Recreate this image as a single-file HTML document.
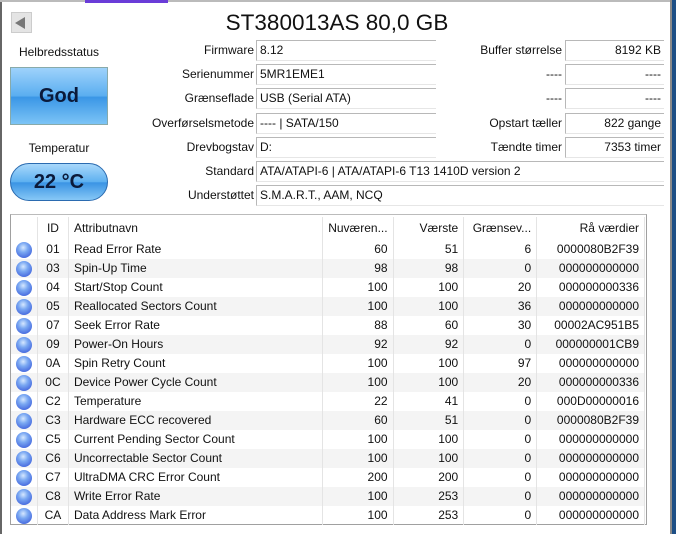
<!DOCTYPE html>
<html><head><meta charset="utf-8"><style>
*{margin:0;padding:0;box-sizing:border-box}
body{width:676px;height:534px;background:#fff;font-family:"Liberation Sans",sans-serif;font-size:12px;color:#111;position:relative;overflow:hidden}
.a{position:absolute}
.lbl{position:absolute;text-align:right;white-space:nowrap;line-height:20px}
.box{position:absolute;height:21px;border:1px solid #b8b8b8;border-right:none;border-bottom:1px solid #e6e6e6;line-height:19px;padding:0 3px;white-space:nowrap;background:#fff}
.r{text-align:right}
table{border-collapse:collapse;position:absolute;left:11px;top:217px;width:634px;font-size:12px}
td{height:19px;line-height:19px;padding:0 5px;border-right:1px solid #e4e4e4;white-space:nowrap}
tr:nth-child(odd) td{background:#f4f4f4}
tr.h td{height:23px;background:#fff}
.dot{width:16px;height:16px;border-radius:50%;background:radial-gradient(circle at 45% 35%,#d6e8ff 0,#7aa8f2 35%,#4a6ee0 75%,#3048b8 100%);margin:0 auto}
</style></head><body>
<div class="a" style="left:0;top:0;width:2px;height:534px;background:#666"></div>
<div class="a" style="left:0;top:0;width:676px;height:2px;background:#bbb"></div>
<div class="a" style="left:85px;top:0;width:83px;height:3px;background:#6a3cd8"></div>
<div class="a" style="left:670px;top:0;width:2px;height:534px;background:#8a8a8a"></div>
<div class="a" style="left:672px;top:0;width:4px;height:534px;background:#1d4f86"></div>
<div class="a" style="left:11px;top:12px;width:21px;height:21px;background:#e4e4e4;border:1px solid #ccc"></div>
<div class="a" style="left:15px;top:17px;width:0;height:0;border-top:6px solid transparent;border-bottom:6px solid transparent;border-right:10px solid #777"></div>
<div class="a" style="left:137px;top:8px;width:400px;text-align:center;font-size:22.5px;line-height:30px">ST380013AS 80,0 GB</div>
<div class="a" style="left:10px;top:43px;width:98px;text-align:center;line-height:18px">Helbredsstatus</div>
<div class="a" style="left:10px;top:67px;width:98px;height:58px;border:1px solid #8aa;background:linear-gradient(#9ed2fb,#5aaef0 50%,#3a96e6 52%,#7cc4f6);text-align:center;line-height:56px;font-weight:bold;font-size:20px;color:#0b1a3a">God</div>
<div class="a" style="left:10px;top:139px;width:98px;text-align:center;line-height:18px">Temperatur</div>
<div class="a" style="left:10px;top:163px;width:98px;height:38px;border-radius:19px;border:1px solid #2b6bb0;background:linear-gradient(#a9d8fb,#5db0f0 50%,#3a94e4 52%,#86c8f6);text-align:center;line-height:36px;font-weight:bold;font-size:20px;color:#0b1a3a">22 °C</div>

<div class="lbl" style="right:422px;top:40px">Firmware</div><div class="box" style="left:256px;top:40px;width:180px">8.12</div>
<div class="lbl" style="right:422px;top:64px">Serienummer</div><div class="box" style="left:256px;top:64px;width:180px">5MR1EME1</div>
<div class="lbl" style="right:422px;top:88px">Grænseflade</div><div class="box" style="left:256px;top:88px;width:180px">USB (Serial ATA)</div>
<div class="lbl" style="right:422px;top:113px">Overførselsmetode</div><div class="box" style="left:256px;top:113px;width:180px">---- | SATA/150</div>
<div class="lbl" style="right:422px;top:137px">Drevbogstav</div><div class="box" style="left:256px;top:137px;width:180px">D:</div>
<div class="lbl" style="right:422px;top:161px">Standard</div><div class="box" style="left:256px;top:161px;width:408px">ATA/ATAPI-6 | ATA/ATAPI-6 T13 1410D version 2</div>
<div class="lbl" style="right:422px;top:185px">Understøttet</div><div class="box" style="left:256px;top:185px;width:408px">S.M.A.R.T., AAM, NCQ</div>

<div class="lbl" style="right:114px;top:40px">Buffer størrelse</div><div class="box r" style="left:565px;top:40px;width:99px">8192 KB</div>
<div class="lbl" style="right:114px;top:64px">----</div><div class="box r" style="left:565px;top:64px;width:99px">----</div>
<div class="lbl" style="right:114px;top:88px">----</div><div class="box r" style="left:565px;top:88px;width:99px">----</div>
<div class="lbl" style="right:114px;top:113px">Opstart tæller</div><div class="box r" style="left:565px;top:113px;width:99px">822 gange</div>
<div class="lbl" style="right:114px;top:137px">Tændte timer</div><div class="box r" style="left:565px;top:137px;width:99px">7353 timer</div>

<div class="a" style="left:10px;top:214px;width:637px;height:311px;border:1px solid #a0a0a0;border-top-color:#bbb"></div>
<table>
<colgroup><col style="width:25px"><col style="width:31px"><col style="width:255px"><col style="width:71px"><col style="width:71px"><col style="width:73px"><col style="width:108px"></colgroup>
<tr class="h"><td></td><td style="text-align:center">ID</td><td>Attributnavn</td><td class="r">Nuværen...</td><td class="r">Værste</td><td class="r">Grænsev...</td><td class="r">Rå værdier</td></tr>
<tr><td><div class="dot"></div></td><td style="text-align:center">01</td><td>Read Error Rate</td><td class="r">60</td><td class="r">51</td><td class="r">6</td><td class="r">0000080B2F39</td></tr>
<tr><td><div class="dot"></div></td><td style="text-align:center">03</td><td>Spin-Up Time</td><td class="r">98</td><td class="r">98</td><td class="r">0</td><td class="r">000000000000</td></tr>
<tr><td><div class="dot"></div></td><td style="text-align:center">04</td><td>Start/Stop Count</td><td class="r">100</td><td class="r">100</td><td class="r">20</td><td class="r">000000000336</td></tr>
<tr><td><div class="dot"></div></td><td style="text-align:center">05</td><td>Reallocated Sectors Count</td><td class="r">100</td><td class="r">100</td><td class="r">36</td><td class="r">000000000000</td></tr>
<tr><td><div class="dot"></div></td><td style="text-align:center">07</td><td>Seek Error Rate</td><td class="r">88</td><td class="r">60</td><td class="r">30</td><td class="r">00002AC951B5</td></tr>
<tr><td><div class="dot"></div></td><td style="text-align:center">09</td><td>Power-On Hours</td><td class="r">92</td><td class="r">92</td><td class="r">0</td><td class="r">000000001CB9</td></tr>
<tr><td><div class="dot"></div></td><td style="text-align:center">0A</td><td>Spin Retry Count</td><td class="r">100</td><td class="r">100</td><td class="r">97</td><td class="r">000000000000</td></tr>
<tr><td><div class="dot"></div></td><td style="text-align:center">0C</td><td>Device Power Cycle Count</td><td class="r">100</td><td class="r">100</td><td class="r">20</td><td class="r">000000000336</td></tr>
<tr><td><div class="dot"></div></td><td style="text-align:center">C2</td><td>Temperature</td><td class="r">22</td><td class="r">41</td><td class="r">0</td><td class="r">000D00000016</td></tr>
<tr><td><div class="dot"></div></td><td style="text-align:center">C3</td><td>Hardware ECC recovered</td><td class="r">60</td><td class="r">51</td><td class="r">0</td><td class="r">0000080B2F39</td></tr>
<tr><td><div class="dot"></div></td><td style="text-align:center">C5</td><td>Current Pending Sector Count</td><td class="r">100</td><td class="r">100</td><td class="r">0</td><td class="r">000000000000</td></tr>
<tr><td><div class="dot"></div></td><td style="text-align:center">C6</td><td>Uncorrectable Sector Count</td><td class="r">100</td><td class="r">100</td><td class="r">0</td><td class="r">000000000000</td></tr>
<tr><td><div class="dot"></div></td><td style="text-align:center">C7</td><td>UltraDMA CRC Error Count</td><td class="r">200</td><td class="r">200</td><td class="r">0</td><td class="r">000000000000</td></tr>
<tr><td><div class="dot"></div></td><td style="text-align:center">C8</td><td>Write Error Rate</td><td class="r">100</td><td class="r">253</td><td class="r">0</td><td class="r">000000000000</td></tr>
<tr><td><div class="dot"></div></td><td style="text-align:center">CA</td><td>Data Address Mark Error</td><td class="r">100</td><td class="r">253</td><td class="r">0</td><td class="r">000000000000</td></tr>
</table>
</body></html>
